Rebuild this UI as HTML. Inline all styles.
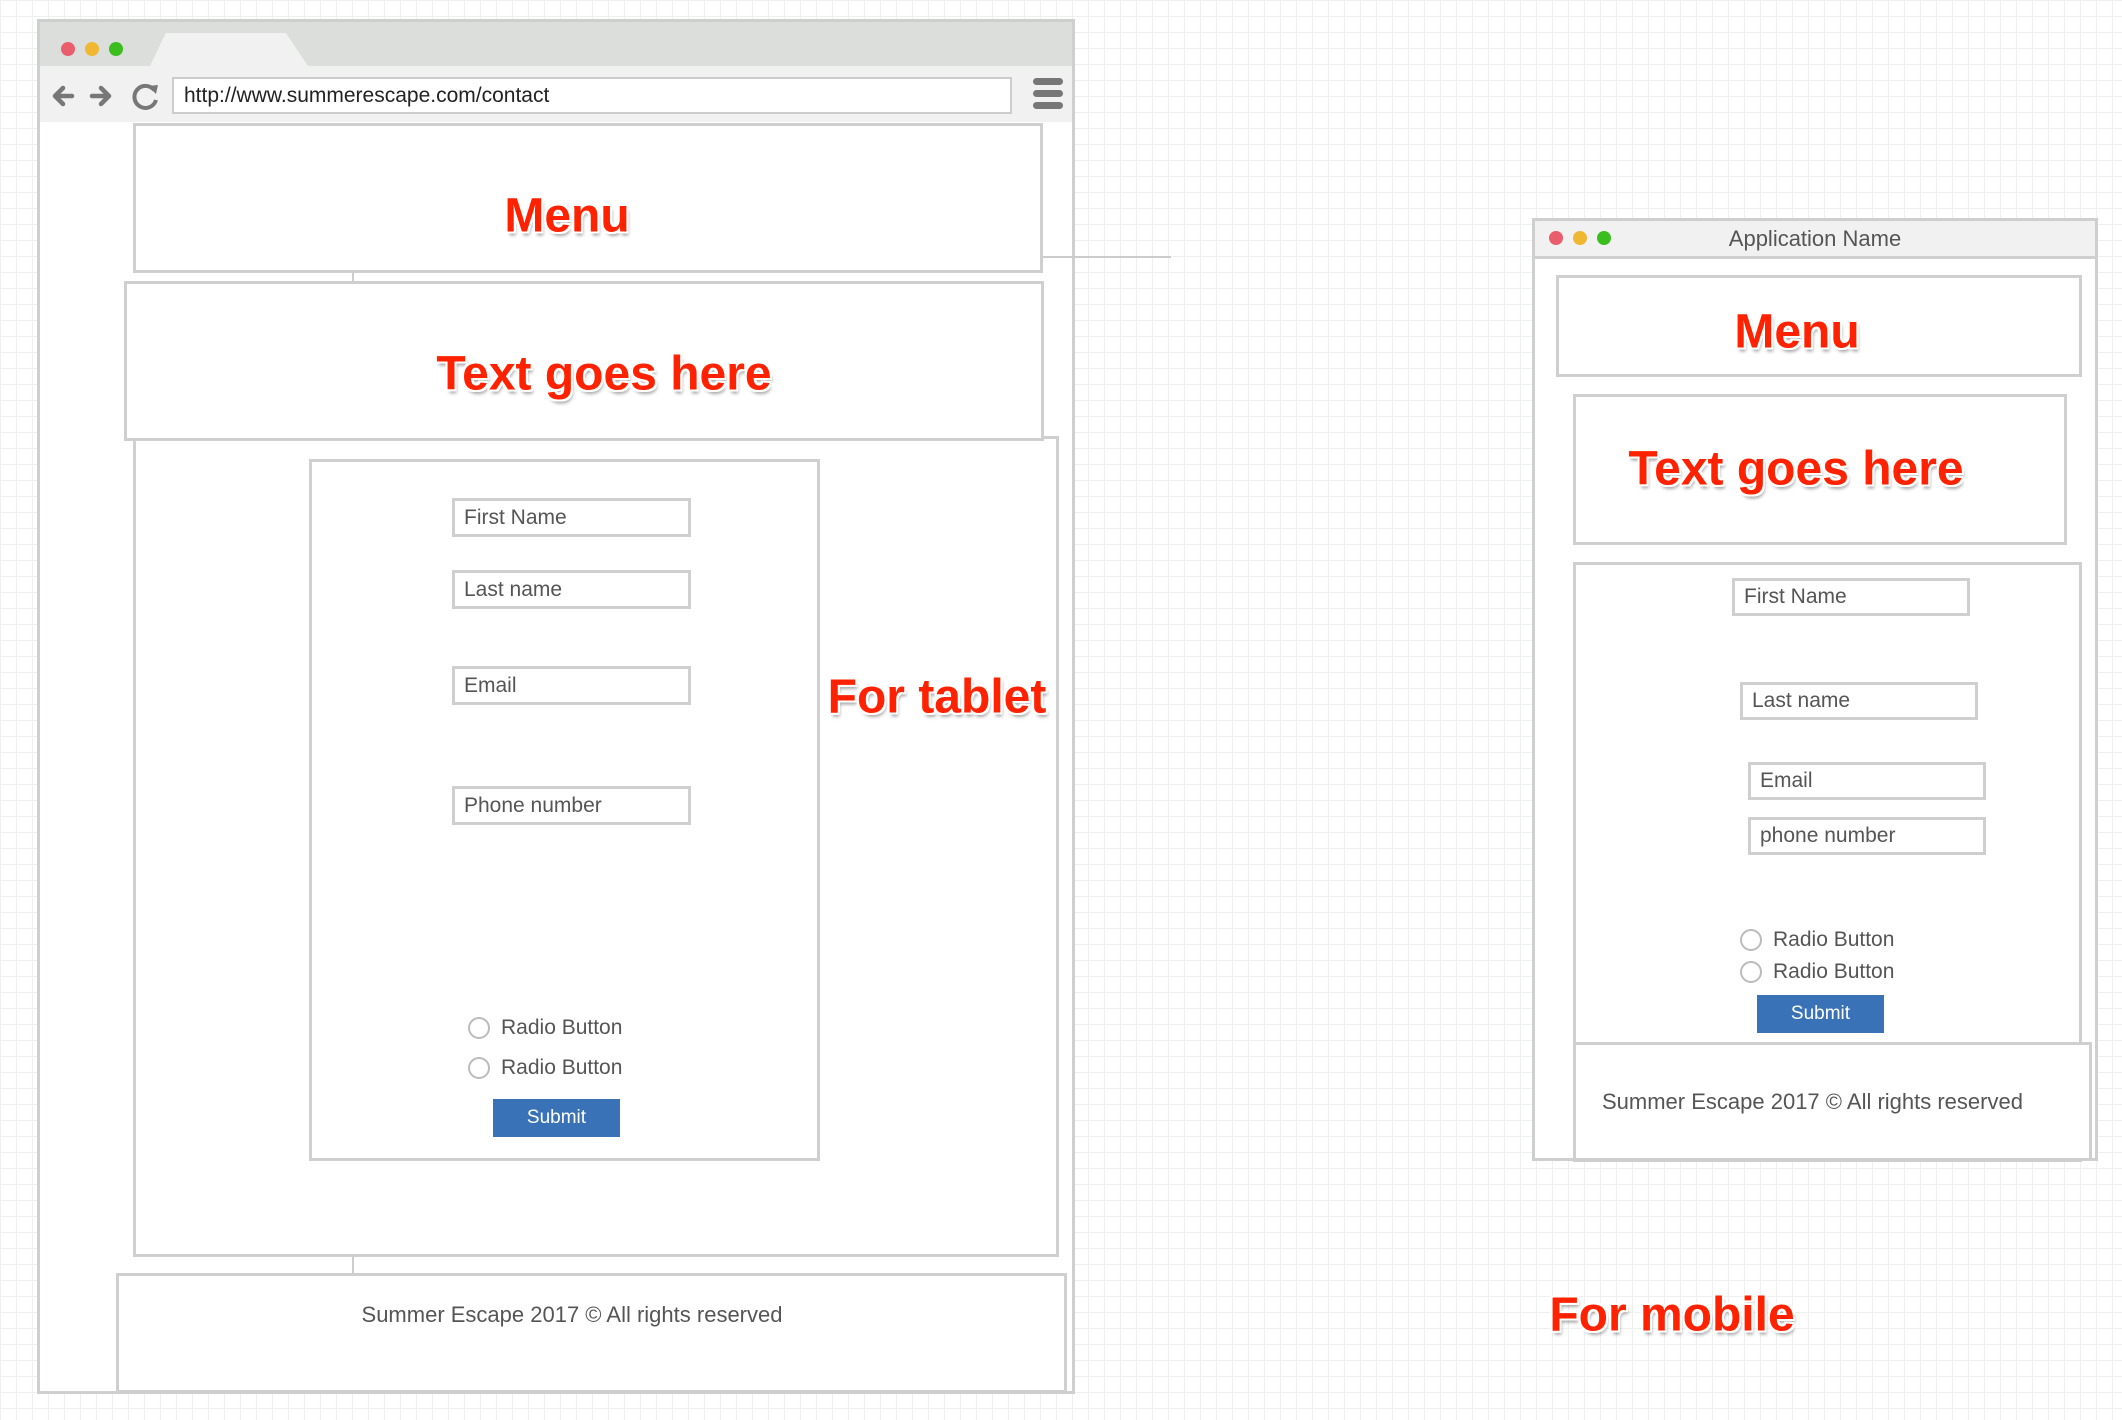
<!DOCTYPE html>
<html><head><meta charset="utf-8"><style>
*{box-sizing:border-box;margin:0;padding:0}
body{width:2122px;height:1420px;position:relative;overflow:hidden;font-family:"Liberation Sans",sans-serif;color:#444;
background-color:#fff;
background-image:linear-gradient(#eef0f0 1px,transparent 1px),linear-gradient(90deg,#eef0f0 1px,transparent 1px);
background-size:16px 16px;}
.a{position:absolute}
.box{position:absolute;border:3px solid #cfcfcf;background:#fff}
.big{position:absolute;font-weight:bold;color:#ff2200;white-space:nowrap;transform:translate(-50%,-46%);
text-shadow:2px 0 #fff,-2px 0 #fff,0 2px #fff,0 -2px #fff,2px 2px #fff,-2px -2px #fff,2px -2px #fff,-2px 2px #fff,2px 4px 3px rgba(0,0,0,.35);}
.inp{position:absolute;border:3px solid #cfcfcf;background:#fff;font-size:21px;padding-left:9px;display:flex;align-items:center;color:#555}
.rad{position:absolute;font-size:21px;color:#555;display:flex;align-items:center;white-space:nowrap}
.rad i{display:inline-block;width:22px;height:22px;border:2px solid #bbb;border-radius:50%;margin-right:11px}
.btn{position:absolute;background:#3a72b8;color:#fff;font-size:19px;display:flex;align-items:center;justify-content:center}
.dot{position:absolute;width:14px;height:14px;border-radius:50%}
</style></head><body>

<!-- tablet browser -->
<div class="a" style="left:37px;top:19px;width:1038px;height:1375px;border:3px solid #cfcfcf;background:#fff"></div>
<div class="a" style="left:40px;top:22px;width:1032px;height:44px;background:#dcdedc"></div>
<div class="a" style="left:150px;top:33px;width:158px;height:33px;background:#f1f1f1;clip-path:polygon(10% 0,86% 0,100% 100%,0 100%)"></div>
<div class="dot" style="left:61px;top:42px;background:#e95d6c"></div>
<div class="dot" style="left:85px;top:42px;background:#efb732"></div>
<div class="dot" style="left:109px;top:42px;background:#3bbd1e"></div>
<div class="a" style="left:40px;top:66px;width:1032px;height:56px;background:#f1f1f1"></div>
<svg class="a" style="left:50px;top:82px" width="110" height="30" viewBox="0 0 110 30">
<path d="M22 14H6M13 6L5 14L13 22" stroke="#777" stroke-width="4.5" fill="none" stroke-linecap="round" stroke-linejoin="round"/>
<path d="M42 14H58M51 6L59 14L51 22" stroke="#777" stroke-width="4.5" fill="none" stroke-linecap="round" stroke-linejoin="round"/>
<path d="M104 8A11 11 0 1 0 106 18" stroke="#777" stroke-width="4" fill="none"/>
<path d="M98 4L108 3L106 12Z" fill="#777"/>
</svg>
<div class="a" style="left:172px;top:77px;width:840px;height:37px;border:2px solid #ccc;background:#fff;font-size:21px;color:#222;padding-left:10px;display:flex;align-items:center">http://www.summerescape.com/contact</div>
<div class="a" style="left:1033px;top:78px;width:30px;height:7px;border-radius:4px;background:#777"></div>
<div class="a" style="left:1033px;top:90px;width:30px;height:7px;border-radius:4px;background:#777"></div>
<div class="a" style="left:1033px;top:102px;width:30px;height:7px;border-radius:4px;background:#777"></div>

<div class="a" style="left:1042px;top:256px;width:129px;height:2px;background:#ccc"></div>
<div class="a" style="left:352px;top:272px;width:2px;height:10px;background:#ccc"></div>
<div class="a" style="left:352px;top:1255px;width:2px;height:18px;background:#ccc"></div>
<div class="box" style="left:133px;top:436px;width:926px;height:821px"></div>
<div class="box" style="left:133px;top:123px;width:910px;height:150px"></div>
<div class="big" style="left:567px;top:214px;font-size:48px">Menu</div>
<div class="box" style="left:124px;top:281px;width:920px;height:160px"></div>
<div class="big" style="left:604px;top:372px;font-size:48px">Text goes here</div>
<div class="box" style="left:309px;top:459px;width:511px;height:702px"></div>
<div class="inp" style="left:452px;top:498px;width:239px;height:39px">First Name</div>
<div class="inp" style="left:452px;top:570px;width:239px;height:39px">Last name</div>
<div class="inp" style="left:452px;top:666px;width:239px;height:39px">Email</div>
<div class="inp" style="left:452px;top:786px;width:239px;height:39px">Phone number</div>
<div class="rad" style="left:468px;top:1016px"><i></i>Radio Button</div>
<div class="rad" style="left:468px;top:1056px"><i></i>Radio Button</div>
<div class="btn" style="left:493px;top:1099px;width:127px;height:38px">Submit</div>
<div class="big" style="left:937px;top:695px;font-size:48px">For tablet</div>
<div class="box" style="left:116px;top:1273px;width:951px;height:120px"></div>
<div class="a" style="left:116px;top:1302px;width:912px;text-align:center;font-size:22px;color:#555">Summer Escape 2017 © All rights reserved</div>

<!-- mobile -->
<div class="a" style="left:1532px;top:218px;width:566px;height:943px;border:3px solid #cfcfcf;background:#fff"></div>
<div class="a" style="left:1535px;top:221px;width:560px;height:38px;background:#f1f1f1;border-bottom:3px solid #cfcfcf"></div>
<div class="dot" style="left:1549px;top:231px;background:#e95d6c"></div>
<div class="dot" style="left:1573px;top:231px;background:#efb732"></div>
<div class="dot" style="left:1597px;top:231px;background:#3bbd1e"></div>
<div class="a" style="left:1535px;top:226px;width:560px;text-align:center;font-size:22px;color:#555">Application Name</div>
<div class="box" style="left:1556px;top:275px;width:526px;height:102px"></div>
<div class="big" style="left:1797px;top:330px;font-size:48px">Menu</div>
<div class="box" style="left:1573px;top:394px;width:494px;height:151px"></div>
<div class="big" style="left:1796px;top:467px;font-size:48px">Text goes here</div>
<div class="box" style="left:1573px;top:562px;width:509px;height:600px"></div>
<div class="inp" style="left:1732px;top:578px;width:238px;height:38px">First Name</div>
<div class="inp" style="left:1740px;top:682px;width:238px;height:38px">Last name</div>
<div class="inp" style="left:1748px;top:762px;width:238px;height:38px">Email</div>
<div class="inp" style="left:1748px;top:817px;width:238px;height:38px">phone number</div>
<div class="rad" style="left:1740px;top:928px"><i></i>Radio Button</div>
<div class="rad" style="left:1740px;top:960px"><i></i>Radio Button</div>
<div class="btn" style="left:1757px;top:995px;width:127px;height:38px">Submit</div>
<div class="box" style="left:1573px;top:1042px;width:519px;height:119px"></div>
<div class="a" style="left:1602px;top:1089px;font-size:22px;color:#555;white-space:nowrap">Summer Escape 2017 © All rights reserved</div>
<div class="big" style="left:1672px;top:1313px;font-size:48px">For mobile</div>
</body></html>
